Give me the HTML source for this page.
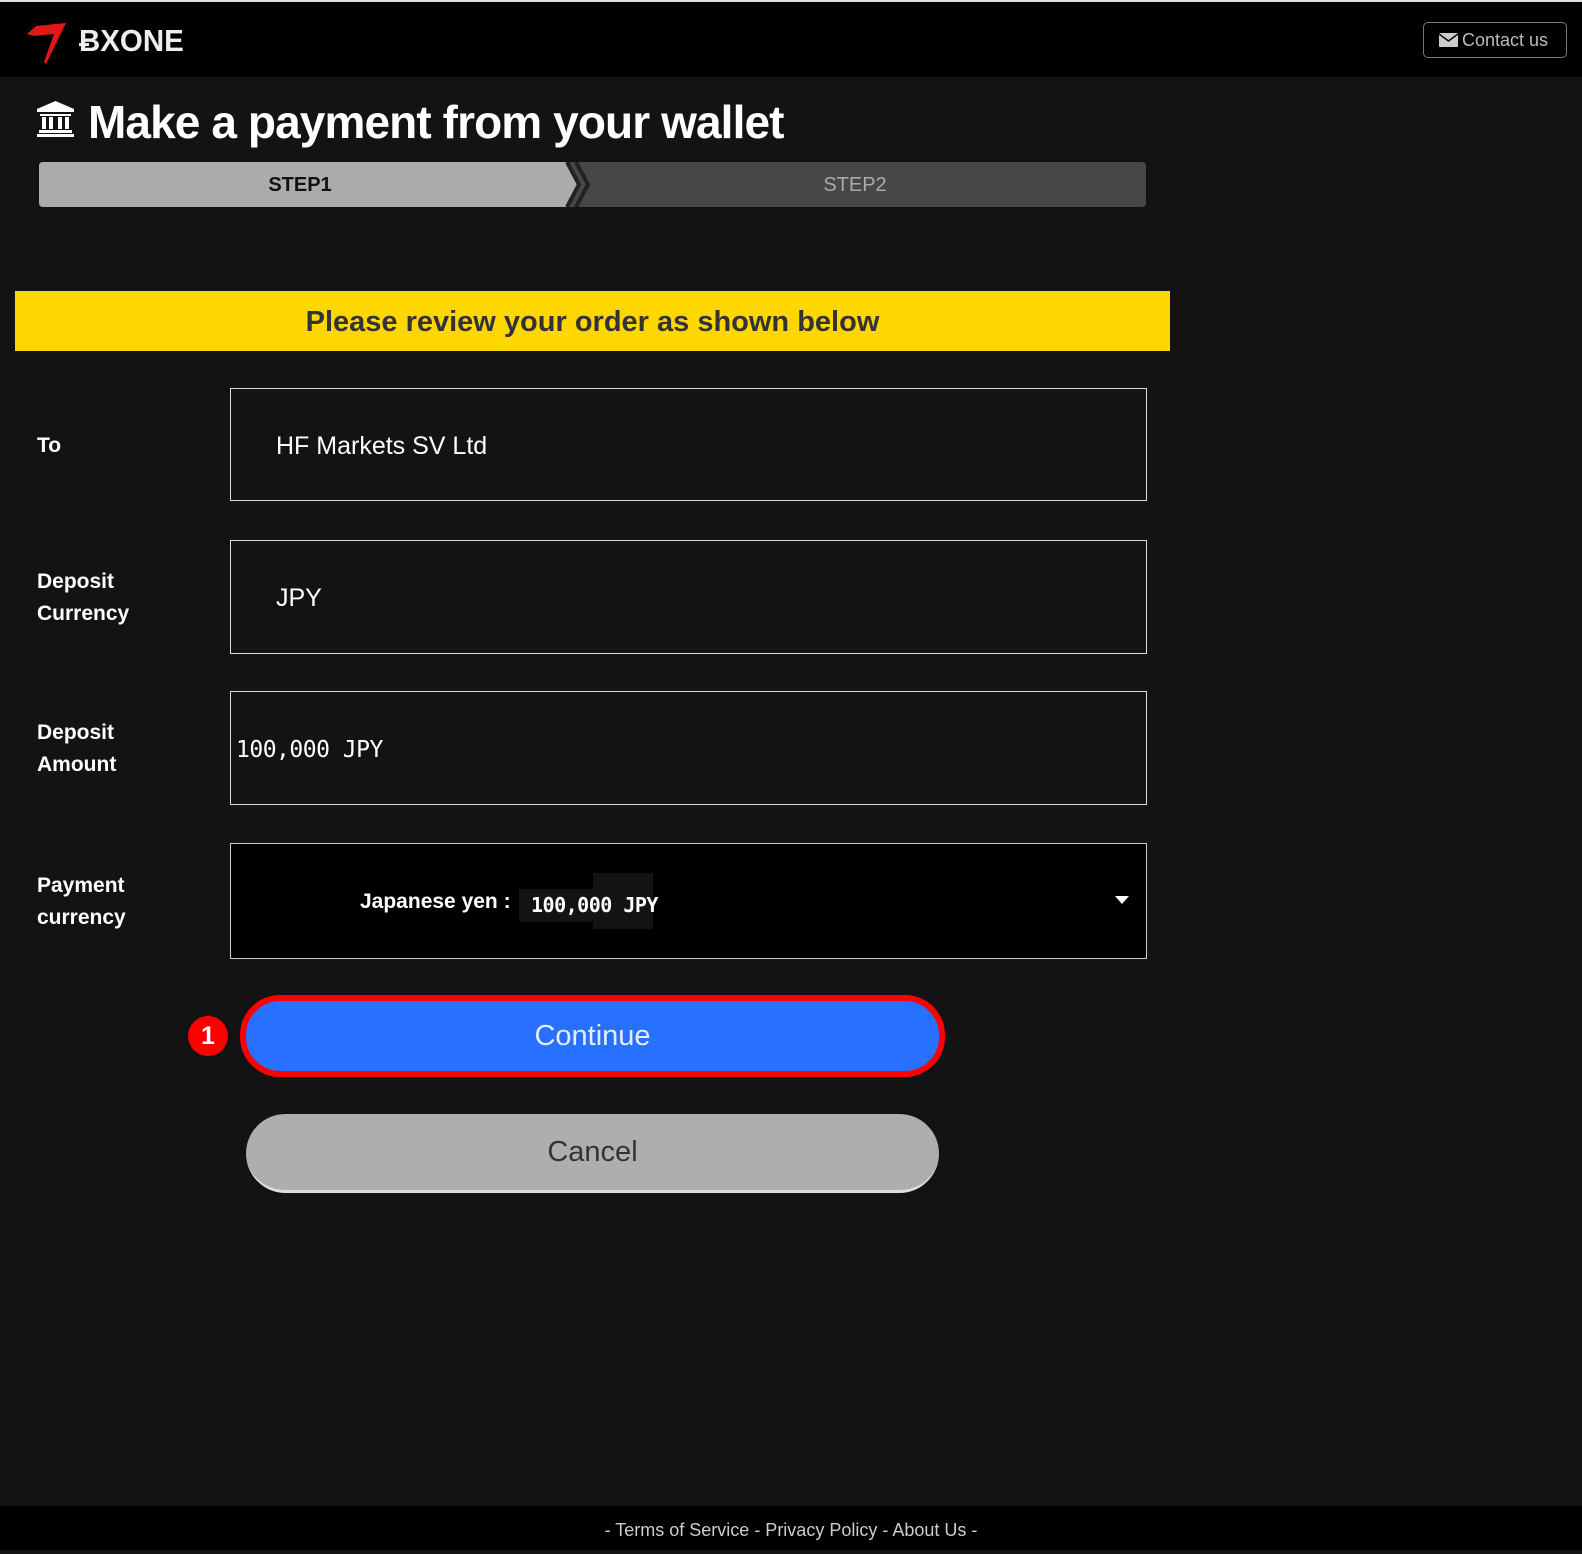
<!DOCTYPE html>
<html><head><meta charset="utf-8"><style>
*{box-sizing:border-box;margin:0;padding:0}
body{width:1582px;height:1550px;background:#131313;font-family:"Liberation Sans",sans-serif;color:#fff;position:relative;overflow:hidden}
.abs{position:absolute}
.hdr{left:0;top:0;width:1582px;height:77px;background:#000;border-top:2px solid #ddd}
.contact{left:1423px;top:22px;width:144px;height:36px;border:1px solid #777;border-radius:5px;color:#bbb;font-size:18px;line-height:34px;padding-left:38px}
.title{left:88px;top:95px;font-size:46px;font-weight:bold;letter-spacing:-0.9px}
.lbl{left:37px;font-size:21px;font-weight:bold;line-height:32px}
.field{left:230px;width:917px;border:1px solid #ddd;font-size:25px;display:flex;align-items:center;padding-top:3px}
.btn{border-radius:40px;text-align:center;font-size:29px}
</style></head><body>
<div class="abs hdr"></div>
<svg class="abs" style="left:24px;top:20px" width="46" height="46" viewBox="0 0 46 46"><path d="M3 14 L12 6 L42 3 L22 44 L20 42 L30 14 L10 16 Z" fill="#e01818"/></svg>
<div class="abs" style="left:79px;top:23px;font-size:31px;letter-spacing:0px;color:#eee;font-weight:bold;transform:scaleX(0.95);transform-origin:left">ɃXONE</div>
<div class="abs contact"><svg class="abs" style="left:15px;top:10px" width="19" height="14" viewBox="0 0 19 14"><rect width="19" height="14" rx="1" fill="#ccc"/><path d="M0 1 L9.5 8 L19 1" stroke="#000" stroke-width="1.5" fill="none"/></svg>Contact us</div>
<svg class="abs" style="left:37px;top:101px" width="37" height="36" viewBox="0 0 37 36"><path d="M18.5 0 L37 8 V11 H0 V8 Z" fill="#fff"/><rect x="3" y="13" width="31" height="2" fill="#fff"/><rect x="5" y="16" width="4" height="12" fill="#fff"/><rect x="12" y="16" width="4" height="12" fill="#fff"/><rect x="21" y="16" width="4" height="12" fill="#fff"/><rect x="28" y="16" width="4" height="12" fill="#fff"/><rect x="2" y="29" width="33" height="3" fill="#fff"/><rect x="0" y="33" width="37" height="3" fill="#fff"/></svg>
<div class="abs title">Make a payment from your wallet</div>
<div class="abs" style="left:39px;top:162px;width:1107px;height:45px;background:#474747;border-radius:4px"></div>
<svg class="abs" style="left:39px;top:162px" width="560" height="45" viewBox="0 0 560 45"><path d="M4 0 H528 L540 22.5 L528 45 H4 Q0 45 0 41 V4 Q0 0 4 0Z" fill="#ababab"/><path d="M528 0 L540 22.5 L528 45 M537 0 L549 22.5 L537 45" stroke="#222" stroke-width="4" fill="none"/></svg>
<div class="abs" style="left:39px;top:174px;width:522px;text-align:center;font-size:20px;font-weight:bold;color:#111">STEP1</div>
<div class="abs" style="left:575px;top:174px;width:560px;text-align:center;font-size:20px;color:#aaa">STEP2</div>
<div class="abs" style="left:15px;top:291px;width:1155px;height:60px;background:#ffd700;color:#333;font-size:29px;font-weight:bold;text-align:center;line-height:62px">Please review your order as shown below</div>
<div class="abs lbl" style="top:430px">To</div>
<div class="abs field" style="top:388px;height:113px;padding-left:45px">HF Markets SV Ltd</div>
<div class="abs lbl" style="top:566px">Deposit<br>Currency</div>
<div class="abs field" style="top:540px;height:114px;padding-left:45px">JPY</div>
<div class="abs lbl" style="top:717px">Deposit<br>Amount</div>
<div class="abs field" style="top:691px;height:114px;padding-left:5px;font-family:'DejaVu Sans Mono','Liberation Mono',monospace;font-size:23px;letter-spacing:-0.5px">100,000 JPY</div>
<div class="abs lbl" style="top:870px">Payment<br>currency</div>
<div class="abs field" style="top:843px;height:116px;background:#000;border-color:#ccc"></div>
<div class="abs" style="left:360px;top:890px;font-size:21px;font-weight:bold">Japanese yen :</div>
<div class="abs" style="left:519px;top:889px;width:74px;height:33px;background:#131313"></div>
<div class="abs" style="left:593px;top:873px;width:60px;height:56px;background:#131313"></div>
<div class="abs" style="left:531px;top:893px;font-family:'DejaVu Sans Mono',monospace;font-size:20px;font-weight:bold;letter-spacing:-0.5px">100,000 JPY</div>
<svg class="abs" style="left:1115px;top:896px" width="14" height="9"><path d="M0 0H14L7 8Z" fill="#fff"/></svg>
<div class="abs" style="left:188px;top:1016px;width:40px;height:40px;border-radius:50%;background:#f00;font-size:25px;font-weight:bold;text-align:center;line-height:40px">1</div>
<div class="abs btn" style="left:240px;top:995px;width:705px;height:82px;background:#2870ff;border:6px solid #f00;color:#e6ecff;line-height:71px">Continue</div>
<div class="abs btn" style="left:246px;top:1114px;width:693px;height:79px;background:#aeaeae;color:#333;line-height:77px;border-bottom:3px solid #ddd">Cancel</div>
<div class="abs" style="left:0;top:1506px;width:1582px;height:44px;background:#000;color:#ccc;text-align:center;font-size:18px;line-height:48px">- Terms of Service - Privacy Policy - About Us -</div>
</body></html>
